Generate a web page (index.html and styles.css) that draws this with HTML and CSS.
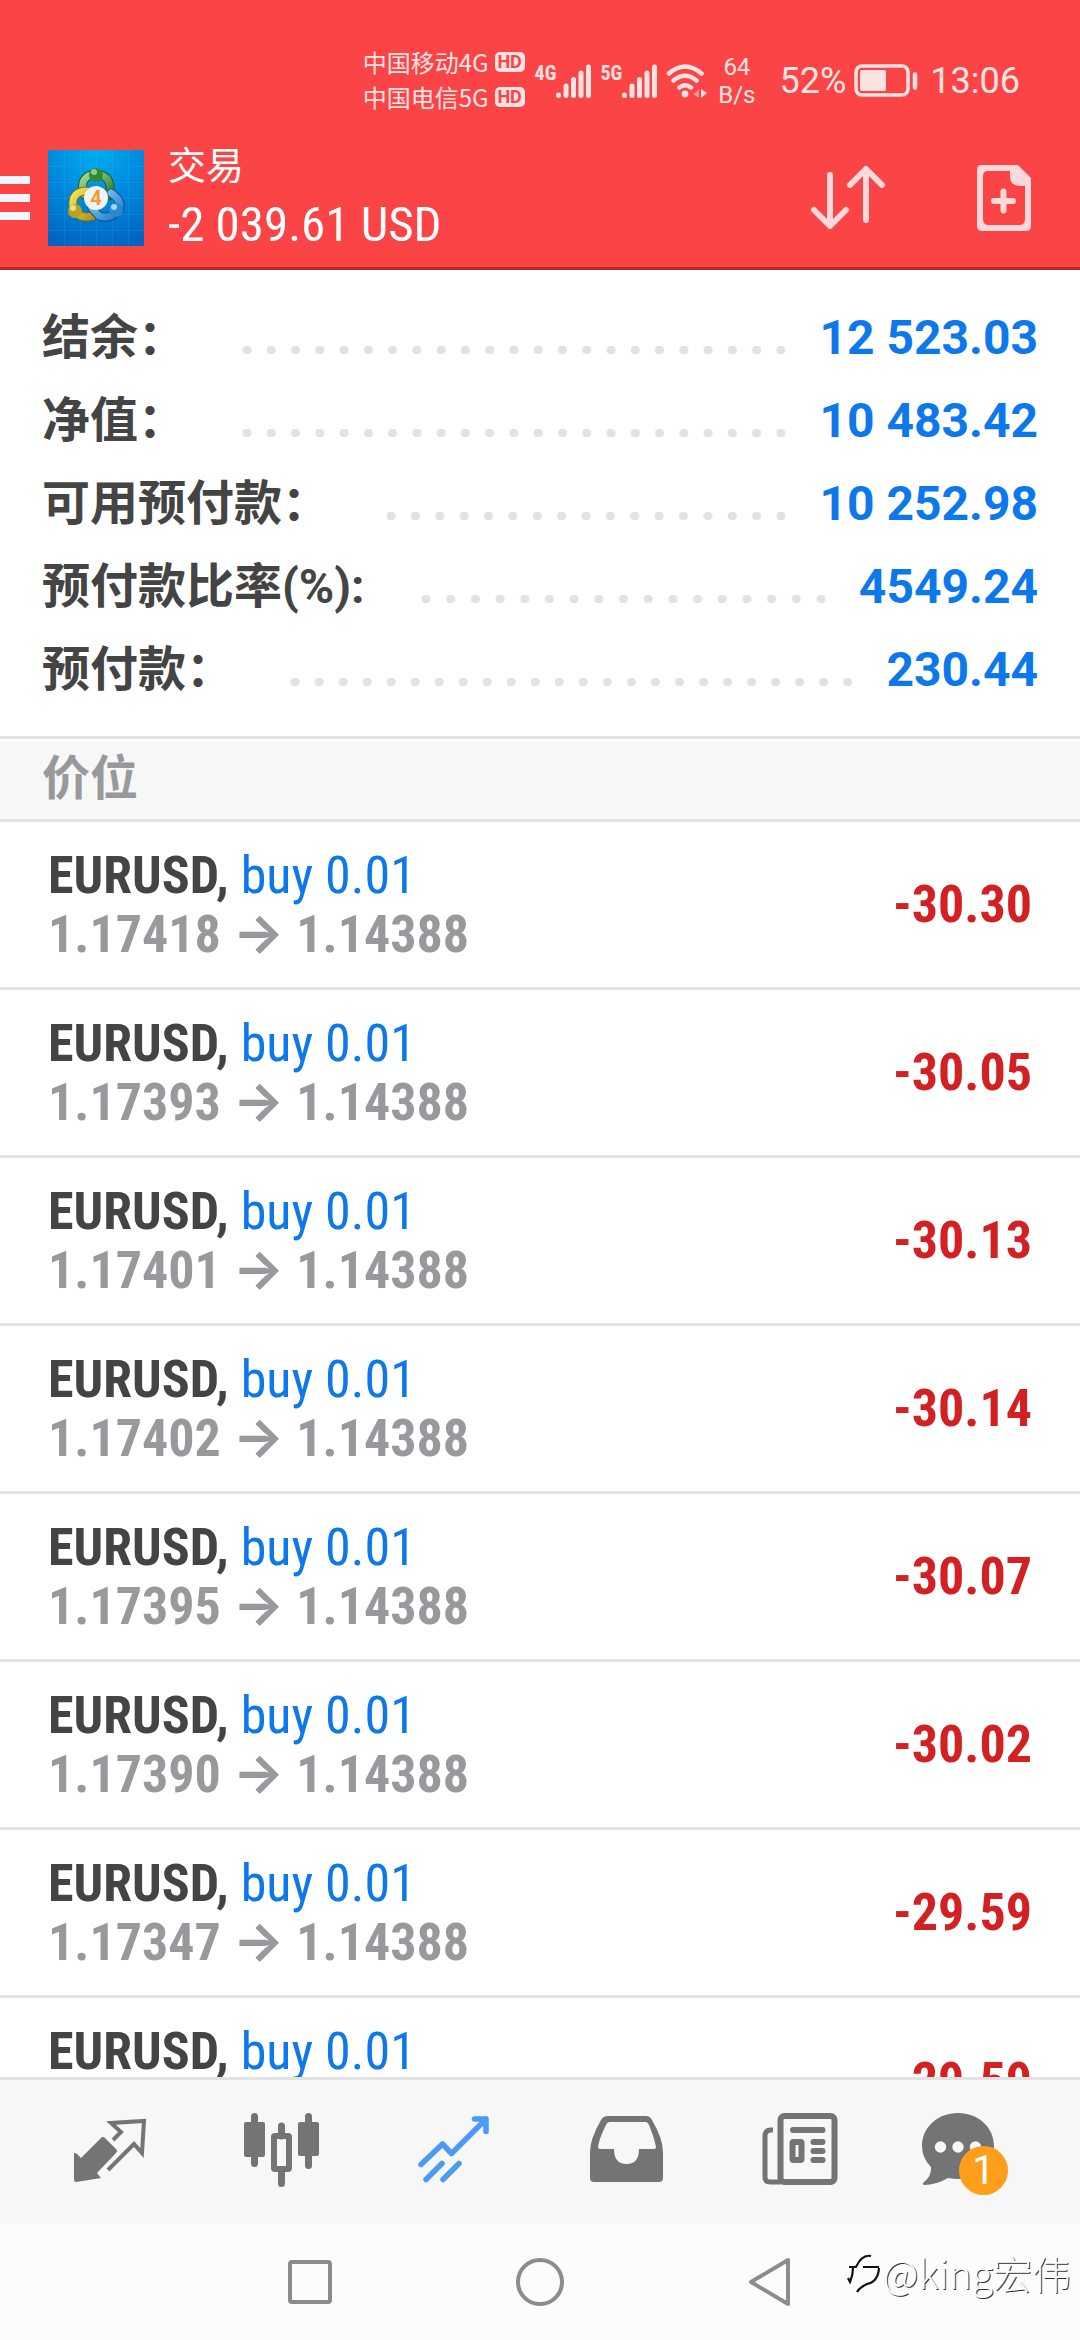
FILE: index.html
```html
<!DOCTYPE html>
<html lang="zh-CN">
<head>
<meta charset="utf-8">
<meta name="viewport" content="width=device-width">
<title>交易</title>
<link rel="stylesheet" href="styles.css">
</head>
<body>
<div class="app">
  <header class="header">
    <div class="status">
      <div class="carriers">
        <div class="carrier"><span>中国移动4G</span><span class="hd">HD</span></div>
        <div class="carrier"><span>中国电信5G</span><span class="hd">HD</span></div>
      </div>
      <div class="signal"><span class="signal-type">4G</span>
        <svg width="35" height="34" viewBox="0 0 35 34"><path d="M2.500 31v.5M10 22v9.500M17.500 15.500v16M25 9v22.500M32.500 3v28.500" stroke="currentColor" stroke-width="5" stroke-linecap="round"/></svg></div>
      <div class="signal"><span class="signal-type">5G</span>
        <svg width="35" height="34" viewBox="0 0 35 34"><path d="M2.500 31v.5M10 22v9.500M17.500 15.500v16M25 9v22.500M32.500 3v28.500" stroke="currentColor" stroke-width="5" stroke-linecap="round"/></svg></div>
      <svg class="wifi" width="42" height="34" viewBox="0 0 42 34" fill="none" stroke="currentColor" stroke-width="4.500" stroke-linecap="round"><path d="M3 9.500Q19 -4.500 35.500 9.500M7.500 16.500Q19 7 30.500 16.500M13.500 23.500Q19 19 25 23.500"/><circle cx="19" cy="30" r="3.400" fill="currentColor" stroke="none"/><path d="M33 26v8l-6-4z" fill="currentColor" fill-opacity=".5" stroke="none"/><path d="M35 25v9l6-5z" fill="currentColor" stroke="none"/></svg>
      <div class="speed"><span>64</span><span>B/s</span></div>
      <div class="clock">52%</div>
      <svg class="battery" width="64" height="34" viewBox="0 0 64 34"><rect x="2" y="2" width="52" height="29" rx="6" fill="none" stroke="currentColor" stroke-width="3.500"/><rect x="6" y="6" width="26" height="21" rx="2" fill="currentColor"/><path d="M61 10.500v13" stroke="currentColor" stroke-width="4.500" stroke-linecap="round"/></svg>
      <div class="clock">13:06</div>
    </div>
    <div class="toolbar">
      <button class="menu" aria-label="菜单"><span></span><span></span><span></span></button>
      <svg class="logo" width="96" height="96" viewBox="0 0 96 96">
        <defs>
          <radialGradient id="sky" cx=".5" cy="0" r="1.050"><stop offset="0" stop-color="#00aef0"/><stop offset=".5" stop-color="#0088dc"/><stop offset="1" stop-color="#0064c0"/></radialGradient>
          <linearGradient id="green" x2="1" y2="1"><stop offset="0" stop-color="#a8dc98"/><stop offset="1" stop-color="#2c7c2c"/></linearGradient>
          <linearGradient id="gold" x2="1" y2="1"><stop offset="0" stop-color="#f0e858"/><stop offset="1" stop-color="#b09420"/></linearGradient>
          <linearGradient id="blue" x2="1" y2="1"><stop offset="0" stop-color="#90d4f8"/><stop offset="1" stop-color="#1c78c8"/></linearGradient>
        </defs>
        <rect width="96" height="96" fill="url(#sky)"/>
        <path d="M16.500 0v96M32.500 0v96M48.500 0v96M64.500 0v96M80.500 0v96M0 16.500h96M0 32.500h96M0 48.500h96M0 64.500h96M0 80.500h96" stroke="#6fd0ff" stroke-opacity=".12"/>
        <g fill="none" stroke-linecap="round">
          <path d="M36 45Q30 26 48 24Q66 26 61 46" stroke="#17601f" stroke-width="9"/>
          <path d="M36 45Q30 26 48 24Q66 26 61 46" stroke="url(#green)" stroke-width="7"/>
          <path d="M38 41Q23 42 25 57Q30 70 45 66" stroke="#7c6c10" stroke-width="9"/>
          <path d="M38 41Q23 42 25 57Q30 70 45 66" stroke="url(#gold)" stroke-width="7"/>
          <path d="M63 43Q75 51 71 60Q62 70 51 66L44 58" stroke="#104c90" stroke-width="9"/>
          <path d="M63 43Q75 51 71 60Q62 70 51 66L44 58" stroke="url(#blue)" stroke-width="7"/>
        </g>
        <circle cx="48" cy="25" r="7" fill="#2f8a35"/><circle cx="46" cy="22" r="3" fill="#8fcb88"/>
        <circle cx="27" cy="61" r="7" fill="#b8a022"/><circle cx="25" cy="58" r="3" fill="#ece08a"/>
        <circle cx="68" cy="60" r="7" fill="#2d86d2"/><circle cx="66" cy="57" r="3" fill="#9ed6fa"/>
        <circle cx="48" cy="48" r="12" fill="#f2f2f4"/>
        <text x="48" y="55" text-anchor="middle" font-family="Roboto, sans-serif" font-size="20" font-weight="700" fill="#f09a38">4</text>
      </svg>
      <div class="titles">
        <h1 class="title">交易</h1>
        <p class="total">-2 039.61 USD</p>
      </div>
      <div class="actions">
        <button class="action" aria-label="排序"><svg width="76" height="76" viewBox="0 0 76 76" fill="none" stroke="currentColor" stroke-width="6" stroke-linecap="round" stroke-linejoin="round"><path d="M20 15v51M4 50l16 16 16-16M56 60V9M40 25L56 9l16 16"/></svg></button>
        <button class="action" aria-label="新订单"><svg width="76" height="76" viewBox="0 0 76 76"><path fill="currentColor" fill-rule="evenodd" d="M15 5h37l13 13v48q0 5-5 5H16q-5 0-5-5V10q0-5 4-5zM22 11q-5 0-5 5v43q0 6 6 6h30q6 0 6-6V26h-6q-9-1-9-9v-6z"/><path d="M28 41h19M37.500 31.500v19" stroke="currentColor" stroke-width="6" stroke-linecap="round"/></svg></button>
      </div>
    </div>
  </header>

  <main class="content">
    <dl class="summary">
      <div class="figure"><dt>结余：</dt><dd>12 523.03</dd></div>
      <div class="figure"><dt>净值：</dt><dd>10 483.42</dd></div>
      <div class="figure"><dt>可用预付款：</dt><dd>10 252.98</dd></div>
      <div class="figure"><dt>预付款比率(%):</dt><dd>4549.24</dd></div>
      <div class="figure"><dt>预付款：</dt><dd>230.44</dd></div>
    </dl>
    <h2 class="section">价位</h2>
    <ul class="positions">
      <li class="position"><div><p class="symbol">EURUSD, <span class="side">buy 0.01</span></p><p class="prices">1.17418 <span class="arrow">→</span> 1.14388</p></div><span class="profit">-30.30</span></li>
      <li class="position"><div><p class="symbol">EURUSD, <span class="side">buy 0.01</span></p><p class="prices">1.17393 <span class="arrow">→</span> 1.14388</p></div><span class="profit">-30.05</span></li>
      <li class="position"><div><p class="symbol">EURUSD, <span class="side">buy 0.01</span></p><p class="prices">1.17401 <span class="arrow">→</span> 1.14388</p></div><span class="profit">-30.13</span></li>
      <li class="position"><div><p class="symbol">EURUSD, <span class="side">buy 0.01</span></p><p class="prices">1.17402 <span class="arrow">→</span> 1.14388</p></div><span class="profit">-30.14</span></li>
      <li class="position"><div><p class="symbol">EURUSD, <span class="side">buy 0.01</span></p><p class="prices">1.17395 <span class="arrow">→</span> 1.14388</p></div><span class="profit">-30.07</span></li>
      <li class="position"><div><p class="symbol">EURUSD, <span class="side">buy 0.01</span></p><p class="prices">1.17390 <span class="arrow">→</span> 1.14388</p></div><span class="profit">-30.02</span></li>
      <li class="position"><div><p class="symbol">EURUSD, <span class="side">buy 0.01</span></p><p class="prices">1.17347 <span class="arrow">→</span> 1.14388</p></div><span class="profit">-29.59</span></li>
      <li class="position"><div><p class="symbol">EURUSD, <span class="side">buy 0.01</span></p></div><span class="profit">-29.59</span></li>
    </ul>
  </main>

  <nav class="tabs">
    <button class="tab" aria-label="报价"><svg width="96" height="96" viewBox="0 0 96 96"><path fill="currentColor" d="M12 49q2 0 3 1l4 4 20-20q2-2 4 0l11 11q2 2 0 4L35 69l4 5-25 4q-2 0-2-3z"/><path d="M51 36l8-8-10-9 33-2-2 32-8-9-26 26" fill="none" stroke="currentColor" stroke-width="4"/></svg></button>
    <button class="tab" aria-label="图表"><svg width="96" height="96" viewBox="0 0 96 96"><path d="M20.500 12.500v47M47.500 22v10M47.500 66v13.500M74.500 12.500v49" stroke="currentColor" stroke-width="7" stroke-linecap="round"/><rect x="10" y="18" width="21" height="35" rx="2" fill="currentColor"/><rect x="64" y="18" width="21" height="34" rx="2" fill="currentColor"/><rect x="40" y="32" width="15" height="33" rx="1" fill="none" stroke="currentColor" stroke-width="6"/></svg></button>
    <button class="tab tab-active" aria-label="交易"><svg width="96" height="96" viewBox="0 0 96 96" fill="none" stroke="currentColor" stroke-width="5.500" stroke-linecap="round" stroke-linejoin="round"><path d="M15 60.500L36.500 40l9 9.500L80 15M68.500 15H80v12.500M20 75.500l16-16M37 75.500l16-16"/></svg></button>
    <button class="tab" aria-label="历史"><svg width="96" height="96" viewBox="0 0 96 96"><path fill="currentColor" fill-rule="evenodd" d="M30 12h38q4 0 6 4 11 19 11 32v26q0 4-4 4H16q-4 0-4-4V48q0-13 11-32 2-4 7-4zM32 18q-3 0-4 3-7 14-8 22 0 2 2 2h14q0 15 12.500 15T61 45h15q2 0 2-2-2-10-7-22-1-3-4-3z"/></svg></button>
    <button class="tab" aria-label="新闻"><svg width="96" height="96" viewBox="0 0 96 96" fill="none" stroke="currentColor"><rect x="30.500" y="12" width="54" height="66" rx="4" stroke-width="6"/><path d="M23 26h-2q-6 0-6 6v41q0 5 5 5h11" stroke-width="5"/><path d="M43 26h29.500M63.500 38h9M63.500 47h9M63.500 56h9" stroke-width="6" stroke-linecap="round"/><rect x="42.500" y="38" width="9" height="18" rx="1" stroke-width="6"/></svg></button>
    <button class="tab" aria-label="消息"><svg width="96" height="96" viewBox="0 0 96 96"><path fill="currentColor" d="M36 9C56 9 72 23 72 42S56 75 36 75q-5 0-10-1Q14 81 2 81q-2-1-1-2 9-7 8-16Q0 54 0 42C0 23 16 9 36 9z"/><circle cx="18.500" cy="43" r="5.700" fill="#f7f7f7"/><circle cx="36" cy="43" r="5.700" fill="#f7f7f7"/><circle cx="53.500" cy="43" r="5.700" fill="#f7f7f7"/></svg><span class="badge">1</span></button>
  </nav>

  <footer class="system">
    <button class="key" aria-label="最近任务"><svg width="52" height="52" viewBox="0 0 52 52" fill="none" stroke="currentColor" stroke-width="4"><rect x="6" y="6" width="40" height="40" rx="2"/></svg></button>
    <button class="key" aria-label="主页"><svg width="52" height="52" viewBox="0 0 52 52" fill="none" stroke="currentColor" stroke-width="4"><circle cx="26" cy="26" r="22"/></svg></button>
    <button class="key" aria-label="返回"><svg width="52" height="52" viewBox="0 0 52 52" fill="none" stroke="currentColor" stroke-width="4" stroke-linejoin="round"><path d="M7 26L44 4v44z"/></svg></button>
    <div class="watermark"><svg width="36" height="44" viewBox="0 0 36 44" fill="none" stroke="#111" stroke-width="2.200"><path d="M4 17h7Q17 4 26 6M8 18Q8 25 5 32L3 28M18 17h16M34 18Q33 32 22 34 15 37 12 42"/></svg><span>@king宏伟</span></div>
  </footer>
</div>
</body>
</html>
```

FILE: styles.css
```css
* {
  box-sizing: border-box;
}

body,
h1,
h2,
p,
dl,
dd,
ul {
  margin: 0;
  padding: 0;
}

body {
  font-family: "Roboto", "Noto Sans CJK SC", sans-serif;
  color: #444;
  background: #fff;
}

button {
  padding: 0;
  border: 0;
  background: none;
  color: inherit;
  font: inherit;
}

svg {
  display: block;
  flex: none;
}

.app {
  display: flex;
  flex-direction: column;
  height: 100vh;
}

/* Header */
.header {
  flex: none;
  background: #fa4446;
  border-bottom: 3px solid #bc2629;
  color: #ffe3e3;
}

.status {
  display: flex;
  align-items: center;
  justify-content: flex-end;
  padding: 44px 60px 6px 0;
}

.carriers {
  margin-right: 10px;
  padding-bottom: 4px;
  font-family: "Noto Sans CJK SC", sans-serif;
  font-size: 24px;
  line-height: 35px;
}

.carrier {
  display: flex;
  align-items: center;
  gap: 6px;
}

.hd {
  width: 30px;
  border-radius: 5px;
  background: #ffe3e3;
  color: #fa4446;
  font: 700 18px/20px "Roboto", sans-serif;
  text-align: center;
}

.signal {
  display: flex;
  align-items: flex-start;
  margin-right: 9px;
}

.signal-type {
  font: 700 20px/18px "Roboto Condensed", "Liberation Sans Narrow", sans-serif;
}

.speed {
  display: flex;
  flex-direction: column;
  margin: 0 24px 0 10px;
  font-size: 24px;
  line-height: 28px;
  text-align: center;
}

.clock {
  font-size: 36px;
  line-height: 42px;
}

.battery {
  margin: 0 12px 0 8px;
}

.toolbar {
  display: flex;
  align-items: center;
  gap: 18px;
  padding: 11px 38px 6px 0;
  color: #fff;
}

.menu {
  display: flex;
  flex-direction: column;
  gap: 10px;
  width: 30px;
}

.menu span {
  height: 8px;
  background: #f4f4ff;
}

.titles {
  padding: 8px 0 0 6px;
}

.title {
  font-size: 38px;
  font-weight: 400;
  line-height: 46px;
}

.total {
  font: 400 49px/72px "Roboto Condensed", "Liberation Sans Narrow", sans-serif;
}

.actions {
  display: flex;
  gap: 80px;
  margin-left: auto;
  color: #ffd8d9;
}

/* Account figures */
.content {
  flex: 1;
  min-height: 0;
  overflow: hidden;
}

.summary {
  padding: 26px 42px 25px;
  border-bottom: 3px solid #e2e2e2;
}

.figure {
  display: flex;
  align-items: center;
  font-size: 48px;
  font-weight: 700;
  line-height: 83px;
}

.figure::after {
  content: "";
  flex: 1;
  order: 1;
  height: 8px;
  margin: 24px 26px 0 49px;
  background: radial-gradient(circle, #e2e2e2 4px, transparent 5px) 0 0 / 24px 8px space;
}

.figure dd {
  order: 2;
  color: #0c78ec;
}

.section {
  margin-top: 3px;
  padding: 0 42px 4px;
  border-bottom: 3px solid #e2e2e2;
  background: #f7f7f7;
  color: #98999c;
  font-size: 48px;
  font-weight: 700;
  line-height: 73px;
}

/* Open positions */
.positions {
  list-style: none;
}

.position {
  display: flex;
  align-items: center;
  justify-content: space-between;
  min-height: 168px;
  padding: 0 48px;
  border-bottom: 3px solid #e2e2e2;
  font: 700 52px/59px "Roboto Condensed", "Liberation Sans Narrow", sans-serif;
}

.position:last-child {
  align-items: flex-start;
  padding-top: 24px;
}

.position:last-child .profit {
  padding-top: 30px;
}

.side {
  color: #0c78ec;
  font-weight: 400;
}

.prices {
  color: #98999c;
}

.arrow {
  font-family: "Inter", "Noto Sans CJK SC", sans-serif;
  font-size: 54px;
  line-height: 0;
}

.profit {
  color: #d32022;
}

/* Bottom bars */
.tabs {
  display: grid;
  grid-template-columns: repeat(6, 1fr);
  flex: none;
  padding: 24px;
  border-top: 3px solid #e2e2e2;
  background: #f7f7f7;
  color: #747474;
}

.tab {
  position: relative;
  display: grid;
  justify-items: center;
}

.tab-active {
  color: #4a9bf4;
}

.badge {
  position: absolute;
  top: 42px;
  left: 50%;
  width: 49px;
  margin-left: -11px;
  border-radius: 50%;
  background: #ff9e1b;
  color: #fff;
  font-size: 40px;
  line-height: 49px;
  text-align: center;
}

.system {
  position: relative;
  display: grid;
  grid-template-columns: repeat(3, 1fr);
  flex: none;
  padding: 32px 18%;
  background: #fcfcfc;
  color: #8c8c8c;
}

.key {
  display: grid;
  justify-items: center;
}

.watermark {
  position: absolute;
  right: 9px;
  bottom: 42px;
  display: flex;
  align-items: center;
  gap: 2px;
  color: #fff;
  font: 300 39px/52px "Noto Sans CJK SC", sans-serif;
  text-shadow: 1px 1px 0 #333;
}
```
